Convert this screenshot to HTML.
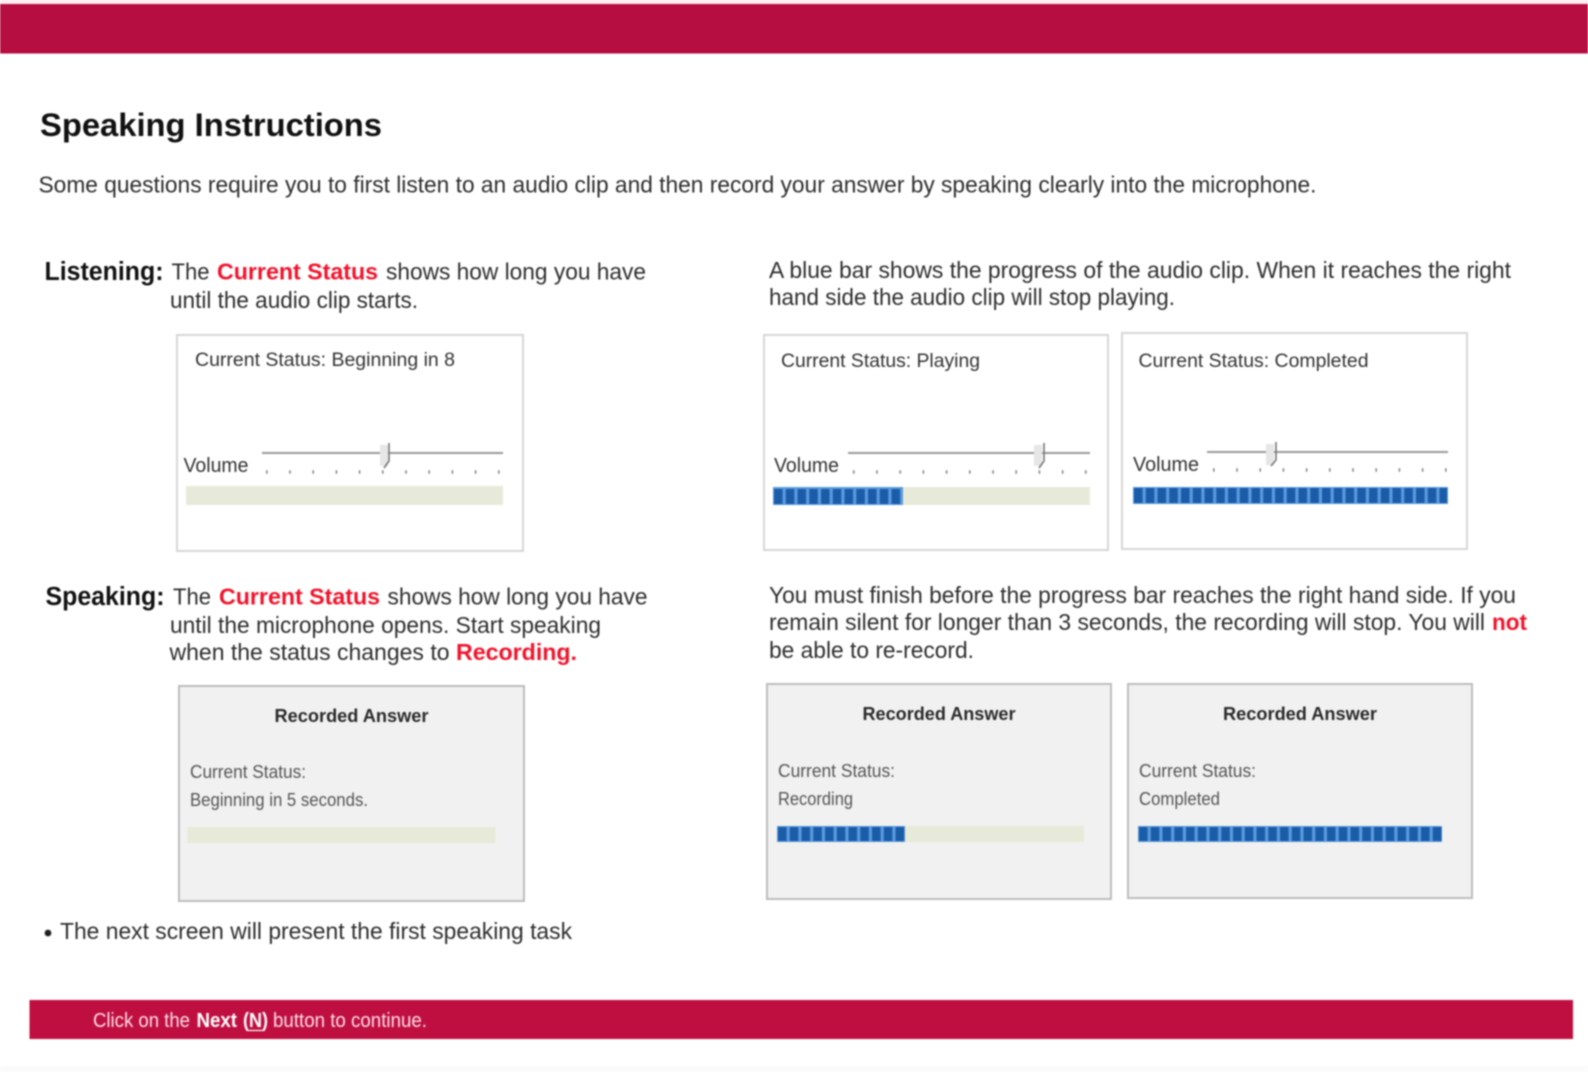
<!DOCTYPE html>
<html lang="en"><head><meta charset="utf-8"><title>Speaking Instructions</title>
<style>
html,body{margin:0;padding:0;background:#fff;width:1588px;height:1072px;overflow:hidden}
svg{display:block;filter:blur(.7px)}
text{font-family:"Liberation Sans",Arial,sans-serif;white-space:pre}
.b{font-size:23.5px;fill:#2e2e2e}
.h{font-size:25.5px;font-weight:bold;fill:#111}
.r{font-size:23.5px;font-weight:bold;fill:#f0142c}
.s{font-size:19.5px;fill:#333}
.v{font-size:20.5px;fill:#333}
.t{font-size:18.5px;font-weight:bold;fill:#2a2a2a}
.c{font-size:18.5px;fill:#555}
.w{font-size:20px;fill:#fbdde6}
.wb{font-size:20px;fill:#fff;font-weight:bold}
.box{fill:#fff;stroke:#d6d6d6;stroke-width:2}
.gbox{fill:#f1f1f1;stroke:#bdbdbd;stroke-width:2}
.tr{fill:#e8ead9}
.sl{stroke:#999;stroke-width:2}
.tk{stroke:#888;stroke-width:3.5;stroke-dasharray:1.6 21.6}
.th{fill:none;stroke:#777;stroke-width:1.6}
</style></head><body>
<svg width="1588" height="1072" viewBox="0 0 1588 1072" xmlns="http://www.w3.org/2000/svg">
<defs>
<pattern id="seg" width="11.75" height="40" patternUnits="userSpaceOnUse"><rect width="8.6" height="40" fill="#1a5ca8"/></pattern>
</defs>
<rect width="1588" height="1072" fill="#fff"/>
<rect y="0" width="1588" height="4" fill="#fdeef2"/>
<rect y="4" width="1588" height="49.500" fill="#b60e40"/>

<text x="40" y="136" style="font-size:32px;font-weight:bold;fill:#111" textLength="342" lengthAdjust="spacingAndGlyphs">Speaking Instructions</text>
<text class="b" x="38.500" y="192.500" textLength="1278" lengthAdjust="spacingAndGlyphs">Some questions require you to first listen to an audio clip and then record your answer by speaking clearly into the microphone.</text>

<!-- Listening -->
<text class="h" x="44.500" y="280" textLength="119" lengthAdjust="spacingAndGlyphs">Listening:</text>
<text class="b" x="171.500" y="279.500" textLength="38" lengthAdjust="spacingAndGlyphs">The</text>
<text class="r" x="217" y="279.500" textLength="161" lengthAdjust="spacingAndGlyphs">Current Status</text>
<text class="b" x="386" y="279.500" textLength="260" lengthAdjust="spacingAndGlyphs">shows how long you have</text>
<text class="b" x="170" y="308" textLength="248" lengthAdjust="spacingAndGlyphs">until the audio clip starts.</text>

<text class="b" x="769" y="278" textLength="742" lengthAdjust="spacingAndGlyphs">A blue bar shows the progress of the audio clip. When it reaches the right</text>
<text class="b" x="769" y="305" textLength="406" lengthAdjust="spacingAndGlyphs">hand side the audio clip will stop playing.</text>

<!-- Box 1 -->
<rect class="box" x="177" y="335" width="346" height="216"/>
<text class="s" x="195" y="366" textLength="260" lengthAdjust="spacingAndGlyphs">Current Status: Beginning in 8</text>
<text class="v" x="183.500" y="472" textLength="65" lengthAdjust="spacingAndGlyphs">Volume</text>
<line class="sl" x1="262" y1="453" x2="503" y2="453"/>
<line class="tk" x1="266" y1="472" x2="500" y2="472"/>
<rect x="380" y="445" width="8" height="21" fill="#e6e6e6"/>
<path class="th" d="M389 443V461L384 468"/>
<rect class="tr" x="186" y="486" width="317" height="19"/>

<!-- Box 2 -->
<rect class="box" x="764" y="335" width="344" height="215"/>
<text class="s" x="781" y="367" textLength="199" lengthAdjust="spacingAndGlyphs">Current Status: Playing</text>
<text class="v" x="774" y="472" textLength="65" lengthAdjust="spacingAndGlyphs">Volume</text>
<line class="sl" x1="848" y1="453" x2="1090" y2="453"/>
<line class="tk" x1="853" y1="472" x2="1087" y2="472"/>
<rect x="1034" y="445" width="8" height="21" fill="#e6e6e6"/>
<path class="th" d="M1044 443V461L1039 468"/>
<rect class="tr" x="774" y="487" width="316" height="18"/>
<rect x="773" y="487" width="130" height="18" fill="#5b9ade"/>
<g transform="translate(774,489)"><rect width="128" height="15" fill="url(#seg)"/></g>

<!-- Box 3 -->
<rect class="box" x="1122" y="333" width="345" height="216"/>
<text class="s" x="1138.500" y="367" textLength="230" lengthAdjust="spacingAndGlyphs">Current Status: Completed</text>
<text class="v" x="1133" y="471" textLength="66" lengthAdjust="spacingAndGlyphs">Volume</text>
<line class="sl" x1="1207" y1="452" x2="1448" y2="452"/>
<line class="tk" x1="1213" y1="470" x2="1447" y2="470"/>
<rect x="1266" y="444" width="8" height="21" fill="#e6e6e6"/>
<path class="th" d="M1276 442V460L1271 466"/>
<rect x="1133" y="487" width="315" height="17" fill="#5b9ade"/>
<g transform="translate(1134,488)"><rect width="313" height="15" fill="url(#seg)"/></g>

<!-- Speaking -->
<text class="h" x="45.500" y="605" textLength="119" lengthAdjust="spacingAndGlyphs">Speaking:</text>
<text class="b" x="173" y="604.500" textLength="38" lengthAdjust="spacingAndGlyphs">The</text>
<text class="r" x="219" y="604.500" textLength="161" lengthAdjust="spacingAndGlyphs">Current Status</text>
<text class="b" x="387.500" y="604.500" textLength="260" lengthAdjust="spacingAndGlyphs">shows how long you have</text>
<text class="b" x="170" y="633" textLength="431" lengthAdjust="spacingAndGlyphs">until the microphone opens. Start speaking</text>
<text class="b" x="169.500" y="660" textLength="280" lengthAdjust="spacingAndGlyphs">when the status changes to</text>
<text class="r" x="456" y="660" textLength="121" lengthAdjust="spacingAndGlyphs">Recording.</text>

<text class="b" x="769" y="603" textLength="747" lengthAdjust="spacingAndGlyphs">You must finish before the progress bar reaches the right hand side. If you</text>
<text class="b" x="769" y="630" textLength="716" lengthAdjust="spacingAndGlyphs">remain silent for longer than 3 seconds, the recording will stop. You will</text>
<text class="r" x="1492" y="630" textLength="35" lengthAdjust="spacingAndGlyphs">not</text>
<text class="b" x="769" y="658" textLength="205" lengthAdjust="spacingAndGlyphs">be able to re-record.</text>

<!-- Box 4 -->
<rect class="gbox" x="179" y="686" width="345" height="215"/>
<text class="t" x="274.500" y="722" textLength="154" lengthAdjust="spacingAndGlyphs">Recorded Answer</text>
<text class="c" x="190" y="778" textLength="116" lengthAdjust="spacingAndGlyphs">Current Status:</text>
<text class="c" x="190" y="806" textLength="178" lengthAdjust="spacingAndGlyphs">Beginning in 5 seconds.</text>
<rect class="tr" x="187.500" y="827" width="308" height="16"/>

<!-- Box 5 -->
<rect class="gbox" x="767" y="684" width="344" height="215"/>
<text class="t" x="862.500" y="720" textLength="153" lengthAdjust="spacingAndGlyphs">Recorded Answer</text>
<text class="c" x="778" y="777" textLength="117" lengthAdjust="spacingAndGlyphs">Current Status:</text>
<text class="c" x="778" y="805" textLength="75" lengthAdjust="spacingAndGlyphs">Recording</text>
<rect class="tr" x="777" y="826" width="307" height="16"/>
<rect x="777" y="826" width="128" height="16" fill="#5b9ade"/>
<g transform="translate(778,827)"><rect width="127" height="14" fill="url(#seg)"/></g>

<!-- Box 6 -->
<rect class="gbox" x="1128" y="684" width="344" height="214"/>
<text class="t" x="1223" y="720" textLength="154" lengthAdjust="spacingAndGlyphs">Recorded Answer</text>
<text class="c" x="1139" y="777" textLength="117" lengthAdjust="spacingAndGlyphs">Current Status:</text>
<text class="c" x="1139" y="805" textLength="81" lengthAdjust="spacingAndGlyphs">Completed</text>
<rect x="1138" y="826" width="304" height="16" fill="#5b9ade"/>
<g transform="translate(1139,827)"><rect width="303" height="14" fill="url(#seg)"/></g>

<!-- Bullet -->
<circle cx="48" cy="933" r="3.400" fill="#222"/>
<text class="b" x="60" y="939" textLength="512" lengthAdjust="spacingAndGlyphs">The next screen will present the first speaking task</text>

<!-- Bottom bar -->
<rect x="29.500" y="1000" width="1543.500" height="39" fill="#bf0f41"/>
<text class="w" x="93" y="1027" textLength="97" lengthAdjust="spacingAndGlyphs">Click on the</text>
<text class="wb" x="196.500" y="1027" textLength="40.500" lengthAdjust="spacingAndGlyphs">Next</text>
<text class="wb" x="243" y="1027" textLength="25" lengthAdjust="spacingAndGlyphs">(N)</text>
<line x1="248" y1="1030.500" x2="263" y2="1030.500" stroke="#fff" stroke-width="1.200"/>
<text class="w" x="273" y="1027" textLength="154" lengthAdjust="spacingAndGlyphs">button to continue.</text>
<rect y="1066" width="1588" height="6" fill="#fbfbfb"/>
</svg>
</body></html>
